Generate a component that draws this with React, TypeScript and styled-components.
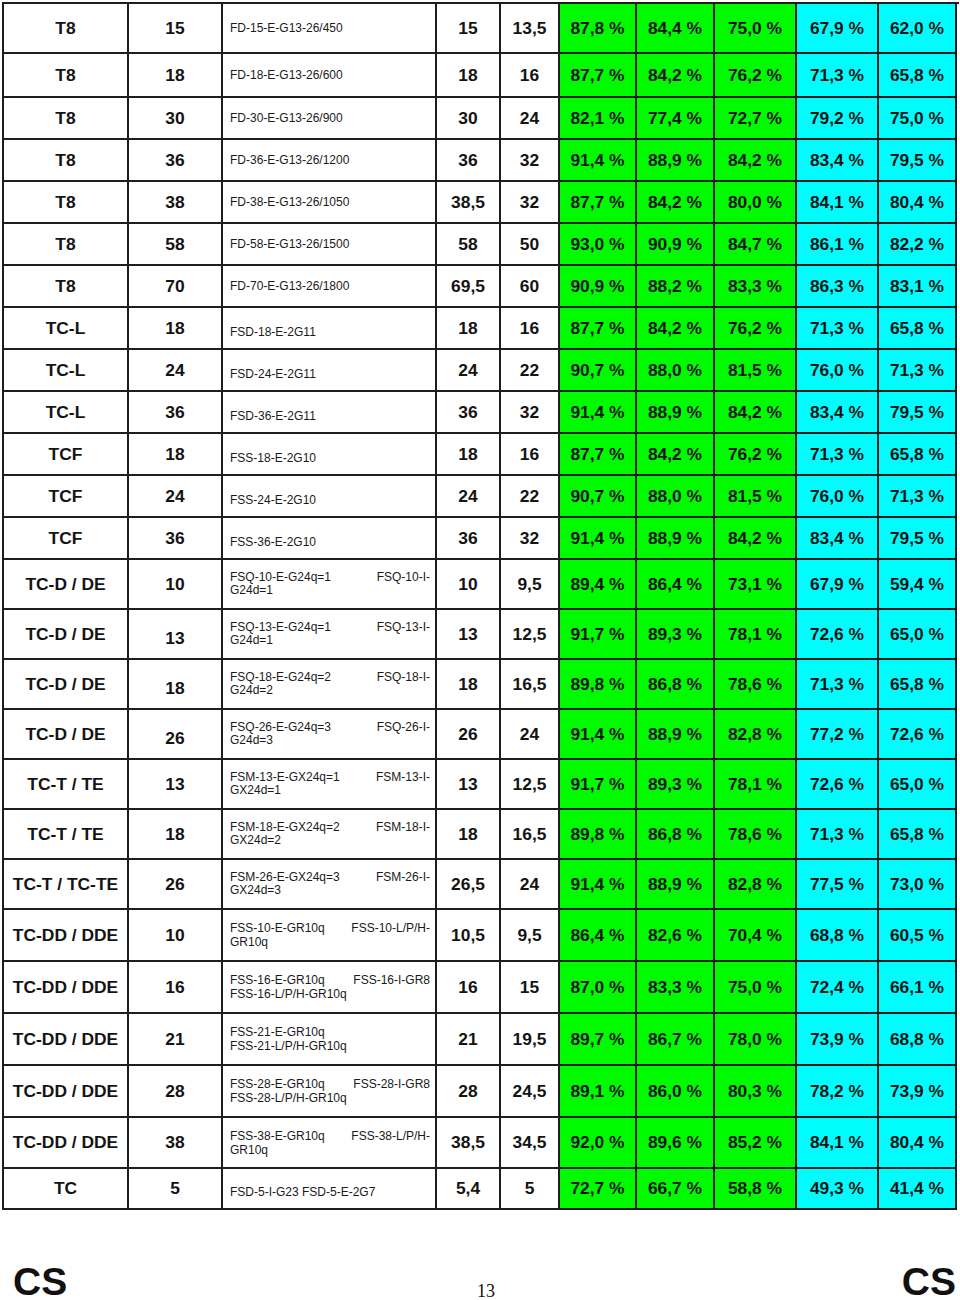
import React from "react";
import styled, { createGlobalStyle } from "styled-components";

const GlobalStyle = createGlobalStyle`
  html, body { margin: 0; padding: 0; background: #ffffff; }
  body { font-family: "Liberation Sans", Arial, sans-serif; color: #111; }
`;

const COLS = "125px 94px 214px 64px 59px 77px 78px 82px 82px 78px";

const Page = styled.div`
  width: 960px;
  box-sizing: border-box;
  padding: 2px 0 0 2px;
  display: flex;
  flex-direction: column;
`;

const Table = styled.div`
  width: 955px;
  border-top: 2px solid #1e1e1e;
  border-left: 2px solid #1e1e1e;
  display: flex;
  flex-direction: column;
`;

const Row = styled.div<{ $h: number }>`
  display: grid;
  grid-template-columns: ${COLS};
  height: ${(p) => p.$h}px;
`;

const Cell = styled.div<{ $bg?: string; $low?: number }>`
  box-sizing: border-box;
  border-right: 2px solid #1e1e1e;
  border-bottom: 2px solid #1e1e1e;
  background: ${(p) => p.$bg || "#ffffff"};
  display: flex;
  align-items: center;
  justify-content: center;
  font-family: "Liberation Sans", Arial, sans-serif;
  font-weight: bold;
  font-size: 17.4px;
  color: #141414;
  white-space: nowrap;
  padding-top: ${(p) => p.$low || 0}px;
`;

const TypeCell = styled.div<{ $low?: number; $lh: number }>`
  box-sizing: border-box;
  border-right: 2px solid #1e1e1e;
  border-bottom: 2px solid #1e1e1e;
  background: #ffffff;
  display: flex;
  flex-direction: column;
  justify-content: center;
  padding: ${(p) => p.$low || 0}px 5px 0 7px;
  font-family: "Liberation Sans", Arial, sans-serif;
  font-size: 12px;
  line-height: ${(p) => p.$lh}px;
  color: #1a1a1a;
`;

const Line = styled.span<{ $justify?: boolean }>`
  display: block;
  white-space: nowrap;
  text-align: ${(p) => (p.$justify ? "justify" : "left")};
  text-align-last: ${(p) => (p.$justify ? "justify" : "left")};
`;

const Footer = styled.div`
  margin-top: 56px;
  padding: 0 4px 0 11px;
  display: grid;
  grid-template-columns: 1fr auto 1fr;
  align-items: end;
`;

const Brand = styled.div<{ $right?: boolean }>`
  font-family: "Liberation Sans", Arial, sans-serif;
  font-weight: bold;
  font-size: 39px;
  line-height: 32px;
  color: #111;
  text-align: ${(p) => (p.$right ? "right" : "left")};
`;

const PageNum = styled.div`
  font-family: "Liberation Serif", "Times New Roman", serif;
  font-size: 18px;
  line-height: 14px;
  color: #111;
  padding-left: 3px;
`;

type RowData = {
  t: string;
  w: string;
  types: string[];
  a: string;
  b: string;
  p: string[];
  h: number;
  wLow?: number;
  tLow?: number;
  lh?: number;
};

const GREEN = "#00fb00";
const CYAN = "#00fdfd";

const base = (
  t: string,
  w: string,
  types: string[],
  a: string,
  b: string,
  p: string[],
  h: number,
  extra: Partial<RowData> = {}
): RowData => ({ t, w, types, a, b, p, h, ...extra });

const rows: RowData[] = [
  base("T8", "15", ["FD-15-E-G13-26/450"], "15", "13,5", ["87,8", "84,4", "75,0", "67,9", "62,0"], 50),
  base("T8", "18", ["FD-18-E-G13-26/600"], "18", "16", ["87,7", "84,2", "76,2", "71,3", "65,8"], 44),
  base("T8", "30", ["FD-30-E-G13-26/900"], "30", "24", ["82,1", "77,4", "72,7", "79,2", "75,0"], 42),
  base("T8", "36", ["FD-36-E-G13-26/1200"], "36", "32", ["91,4", "88,9", "84,2", "83,4", "79,5"], 42),
  base("T8", "38", ["FD-38-E-G13-26/1050"], "38,5", "32", ["87,7", "84,2", "80,0", "84,1", "80,4"], 42),
  base("T8", "58", ["FD-58-E-G13-26/1500"], "58", "50", ["93,0", "90,9", "84,7", "86,1", "82,2"], 42),
  base("T8", "70", ["FD-70-E-G13-26/1800"], "69,5", "60", ["90,9", "88,2", "83,3", "86,3", "83,1"], 42),
  base("TC-L", "18", ["FSD-18-E-2G11"], "18", "16", ["87,7", "84,2", "76,2", "71,3", "65,8"], 42, { tLow: 8 }),
  base("TC-L", "24", ["FSD-24-E-2G11"], "24", "22", ["90,7", "88,0", "81,5", "76,0", "71,3"], 42, { tLow: 8 }),
  base("TC-L", "36", ["FSD-36-E-2G11"], "36", "32", ["91,4", "88,9", "84,2", "83,4", "79,5"], 42, { tLow: 8 }),
  base("TCF", "18", ["FSS-18-E-2G10"], "18", "16", ["87,7", "84,2", "76,2", "71,3", "65,8"], 42, { tLow: 8 }),
  base("TCF", "24", ["FSS-24-E-2G10"], "24", "22", ["90,7", "88,0", "81,5", "76,0", "71,3"], 42, { tLow: 8 }),
  base("TCF", "36", ["FSS-36-E-2G10"], "36", "32", ["91,4", "88,9", "84,2", "83,4", "79,5"], 42, { tLow: 8 }),
  base("TC-D / DE", "10", ["FSQ-10-E-G24q=1 FSQ-10-I-", "G24d=1"], "10", "9,5", ["89,4", "86,4", "73,1", "67,9", "59,4"], 50, { lh: 13.5 }),
  base("TC-D / DE", "13", ["FSQ-13-E-G24q=1 FSQ-13-I-", "G24d=1"], "13", "12,5", ["91,7", "89,3", "78,1", "72,6", "65,0"], 50, { lh: 13.5, wLow: 8 }),
  base("TC-D / DE", "18", ["FSQ-18-E-G24q=2 FSQ-18-I-", "G24d=2"], "18", "16,5", ["89,8", "86,8", "78,6", "71,3", "65,8"], 50, { lh: 13.5, wLow: 8 }),
  base("TC-D / DE", "26", ["FSQ-26-E-G24q=3 FSQ-26-I-", "G24d=3"], "26", "24", ["91,4", "88,9", "82,8", "77,2", "72,6"], 50, { lh: 13.5, wLow: 8 }),
  base("TC-T / TE", "13", ["FSM-13-E-GX24q=1 FSM-13-I-", "GX24d=1"], "13", "12,5", ["91,7", "89,3", "78,1", "72,6", "65,0"], 50, { lh: 13.5 }),
  base("TC-T / TE", "18", ["FSM-18-E-GX24q=2 FSM-18-I-", "GX24d=2"], "18", "16,5", ["89,8", "86,8", "78,6", "71,3", "65,8"], 50, { lh: 13.5 }),
  base("TC-T / TC-TE", "26", ["FSM-26-E-GX24q=3 FSM-26-I-", "GX24d=3"], "26,5", "24", ["91,4", "88,9", "82,8", "77,5", "73,0"], 50, { lh: 13.5 }),
  base("TC-DD / DDE", "10", ["FSS-10-E-GR10q FSS-10-L/P/H-", "GR10q"], "10,5", "9,5", ["86,4", "82,6", "70,4", "68,8", "60,5"], 52, { lh: 14 }),
  base("TC-DD / DDE", "16", ["FSS-16-E-GR10q FSS-16-I-GR8", "FSS-16-L/P/H-GR10q"], "16", "15", ["87,0", "83,3", "75,0", "72,4", "66,1"], 52, { lh: 14 }),
  base("TC-DD / DDE", "21", ["FSS-21-E-GR10q", "FSS-21-L/P/H-GR10q"], "21", "19,5", ["89,7", "86,7", "78,0", "73,9", "68,8"], 52, { lh: 14 }),
  base("TC-DD / DDE", "28", ["FSS-28-E-GR10q FSS-28-I-GR8", "FSS-28-L/P/H-GR10q"], "28", "24,5", ["89,1", "86,0", "80,3", "78,2", "73,9"], 52, { lh: 14 }),
  base("TC-DD / DDE", "38", ["FSS-38-E-GR10q FSS-38-L/P/H-", "GR10q"], "38,5", "34,5", ["92,0", "89,6", "85,2", "84,1", "80,4"], 51, { lh: 14 }),
  base("TC", "5", ["FSD-5-I-G23 FSD-5-E-2G7"], "5,4", "5", ["72,7", "66,7", "58,8", "49,3", "41,4"], 41, { tLow: 6 }),
];

export default function App() {
  return (
    <>
      <GlobalStyle />
      <Page>
        <Table>
          {rows.map((r, i) => (
            <Row key={i} $h={r.h}>
              <Cell>{r.t}</Cell>
              <Cell $low={r.wLow}>{r.w}</Cell>
              <TypeCell $low={r.tLow} $lh={r.lh || 14}>
                {r.types.map((line, j) => (
                  <Line key={j} $justify={r.types.length > 1 && j === 0 && line.includes(" ")}>
                    {line}
                  </Line>
                ))}
              </TypeCell>
              <Cell>{r.a}</Cell>
              <Cell>{r.b}</Cell>
              {r.p.map((v, k) => (
                <Cell key={k} $bg={k < 3 ? GREEN : CYAN}>
                  {v} %
                </Cell>
              ))}
            </Row>
          ))}
        </Table>
        <Footer>
          <Brand>CS</Brand>
          <PageNum>13</PageNum>
          <Brand $right>CS</Brand>
        </Footer>
      </Page>
    </>
  );
}
